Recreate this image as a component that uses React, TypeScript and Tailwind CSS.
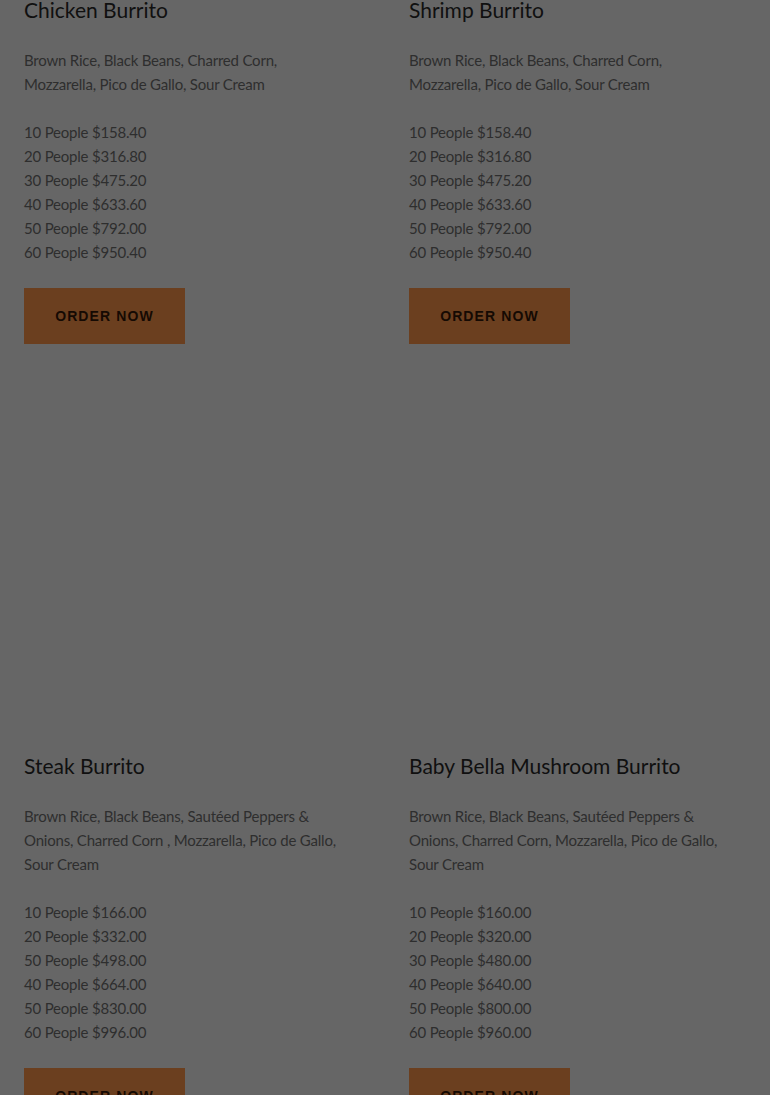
const burritos = [
  {
    name: "Chicken Burrito",
    lines: ["Brown Rice, Black Beans, Charred Corn,", "Mozzarella, Pico de Gallo, Sour Cream"],
    prices: ["10 People $158.40", "20 People $316.80", "30 People $475.20", "40 People $633.60", "50 People $792.00", "60 People $950.40"],
  },
  {
    name: "Shrimp Burrito",
    lines: ["Brown Rice, Black Beans, Charred Corn,", "Mozzarella, Pico de Gallo, Sour Cream"],
    prices: ["10 People $158.40", "20 People $316.80", "30 People $475.20", "40 People $633.60", "50 People $792.00", "60 People $950.40"],
  },
  {
    name: "Steak Burrito",
    lines: ["Brown Rice, Black Beans, Sautéed Peppers &", "Onions, Charred Corn , Mozzarella, Pico de Gallo,", "Sour Cream"],
    prices: ["10 People $166.00", "20 People $332.00", "50 People $498.00", "40 People $664.00", "50 People $830.00", "60 People $996.00"],
  },
  {
    name: "Baby Bella Mushroom Burrito",
    lines: ["Brown Rice, Black Beans, Sautéed Peppers &", "Onions, Charred Corn, Mozzarella, Pico de Gallo,", "Sour Cream"],
    prices: ["10 People $160.00", "20 People $320.00", "30 People $480.00", "40 People $640.00", "50 People $800.00", "60 People $960.00"],
  },
];

function Card({ item, withImage }: { item: (typeof burritos)[number]; withImage: boolean }) {
  return (
    <div className="flex flex-col items-start">
      {withImage && <div className="w-full h-[408px]"></div>}
      <h3 className="text-[21px] leading-[28px] text-[#101010] mb-6">{item.name}</h3>
      <p className="text-[15px] leading-6 tracking-[-0.2px] text-[#2e2e2e] mb-6">
        {item.lines.map((l, i) => (
          <span key={i} className="block whitespace-nowrap">
            {l}
          </span>
        ))}
      </p>
      <div className="text-[15px] leading-6 tracking-[-0.2px] text-[#2e2e2e] mb-6">
        {item.prices.map((p, i) => (
          <div key={i}>{p}</div>
        ))}
      </div>
      <button className="w-[161px] h-[56px] bg-[#6b3f1f] text-[#150a03] text-[14px] font-bold tracking-[0.08em] font-['Liberation_Sans',Arial,sans-serif]">
        ORDER NOW
      </button>
    </div>
  );
}

export default function App() {
  return (
    <div className="w-full min-h-screen bg-[#666666] overflow-hidden font-['Lato','Noto_Sans',sans-serif]">
      <div className="grid grid-cols-2 gap-x-12 px-6 -mt-[4px]">
        {burritos.map((b, i) => (
          <Card key={b.name} item={b} withImage={i >= 2} />
        ))}
      </div>
    </div>
  );
}
